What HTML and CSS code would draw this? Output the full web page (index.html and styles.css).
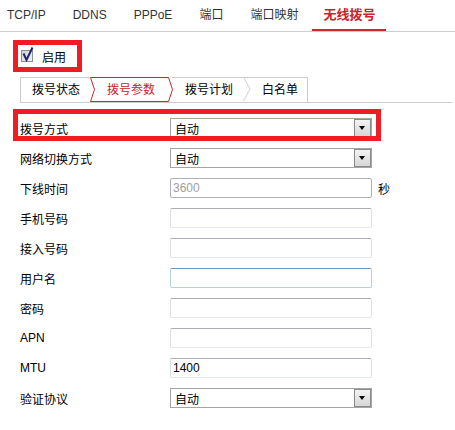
FILE: index.html
```html
<!DOCTYPE html>
<html lang="zh-CN">
<head>
<meta charset="utf-8">
<title>无线拨号</title>
<link rel="stylesheet" href="styles.css">
</head>
<body>
<nav class="topnav">
  <a class="topnav__tab">TCP/IP</a>
  <a class="topnav__tab">DDNS</a>
  <a class="topnav__tab">PPPoE</a>
  <a class="topnav__tab">端口</a>
  <a class="topnav__tab">端口映射</a>
  <a class="topnav__tab topnav__tab--active">无线拨号</a>
</nav>

<label class="enable">
  <svg class="enable__box" width="15" height="17" viewBox="0 0 15 17">
    <defs>
      <linearGradient id="cbg" x1="0" y1="0" x2="1" y2="1">
        <stop offset="0" stop-color="#cfcfcf"/>
        <stop offset="1" stop-color="#f4f4f4"/>
      </linearGradient>
    </defs>
    <rect x="0.5" y="4.5" width="11" height="11" fill="url(#cbg)" stroke="#8e8f8f"/>
    <path d="M2.5 7.5 L5.5 14 L11.5 1.5" fill="none" stroke="#1b2470" stroke-width="2" stroke-linejoin="miter"/>
  </svg>
  <span>启用</span>
</label>

<div class="subtabs">
  <a class="subtabs__tab subtabs__tab--first">拨号状态</a>
  <a class="subtabs__tab subtabs__tab--active">拨号参数
    <svg class="subtabs__outline" viewBox="0 0 83 26" preserveAspectRatio="none">
      <polygon points="0.5,0.5 78.5,0.5 82.5,12.5 78.5,24.5 0.5,24.5 4.5,12.5" fill="none" stroke="#d0252d" stroke-width="1"/>
    </svg>
  </a>
  <a class="subtabs__tab subtabs__tab--third">拨号计划</a>
  <a class="subtabs__tab subtabs__tab--last">白名单
    <svg class="subtabs__chev" viewBox="0 0 8 26" preserveAspectRatio="none">
      <polyline points="0.5,0 7,12.5 0.5,25" fill="none" stroke="#cfcfcf" stroke-width="1"/>
    </svg>
  </a>
</div>

<form class="form">
  <div class="row row--marked">
    <span class="row__label">拨号方式</span>
    <div class="select"><span class="select__text">自动</span><span class="select__btn"></span></div>
  </div>
  <div class="row">
    <span class="row__label">网络切换方式</span>
    <div class="select"><span class="select__text">自动</span><span class="select__btn"></span></div>
  </div>
  <div class="row">
    <span class="row__label">下线时间</span>
    <input class="input input--disabled" value="3600" disabled>
    <span class="row__unit">秒</span>
  </div>
  <div class="row">
    <span class="row__label">手机号码</span>
    <input class="input">
  </div>
  <div class="row">
    <span class="row__label">接入号码</span>
    <input class="input">
  </div>
  <div class="row">
    <span class="row__label">用户名</span>
    <input class="input input--focus">
  </div>
  <div class="row">
    <span class="row__label">密码</span>
    <input class="input" type="password">
  </div>
  <div class="row">
    <span class="row__label">APN</span>
    <input class="input">
  </div>
  <div class="row">
    <span class="row__label">MTU</span>
    <input class="input" value="1400">
  </div>
  <div class="row">
    <span class="row__label">验证协议</span>
    <div class="select"><span class="select__text">自动</span><span class="select__btn"></span></div>
  </div>
</form>
</body>
</html>
```

FILE: styles.css
```css
*, *::before, *::after { box-sizing: border-box; }

body {
  margin: 0;
  background: #fff;
  color: #000;
  font-family: "Liberation Sans", "Noto Sans CJK SC", sans-serif;
  font-size: 12px;
}

/* top navigation */
.topnav {
  display: flex;
  height: 32px;
  padding-left: 7px;
  border-bottom: 1px solid #cccccc;
}
.topnav__tab {
  height: 31px;
  line-height: 30px;
  padding: 0 13px;
  margin-right: 1px;
  color: #333;
  font-size: 12px;
  border-bottom: 2px solid transparent;
}
.topnav__tab:first-child { padding-left: 0; }
.topnav__tab--active {
  color: #c9232c;
  font-weight: bold;
  font-size: 13px;
  border-bottom-color: #d0252d;
  padding: 0 11px;
}

/* enable checkbox */
.enable {
  display: flex;
  align-items: center;
  width: 59px;
  height: 22px;
  margin: 13px 0 0 18px;
  padding-left: 3px;
  outline: 5px solid #ee1c24;
}
.enable__box { margin-top: -3px; }
.enable span { margin-left: 6px; }

/* sub tabs */
.subtabs {
  display: flex;
  height: 26px;
  margin: 10px 3px 0 20px;
  border-bottom: 1px solid #cccccc;
}
.subtabs__tab {
  position: relative;
  height: 25px;
  line-height: 24px;
  border-top: 1px solid #cccccc;
  color: #000;
}
.subtabs__tab--first {
  border-left: 1px solid #cccccc;
  padding: 0 10px 0 11px;
}
.subtabs__tab--active {
  width: 82px;
  color: #c9232c;
  padding-left: 17px;
  border-top-color: transparent;
}
.subtabs__tab--third {
  width: 74px;
  padding-left: 13px;
}
.subtabs__tab--last {
  width: 62px;
  padding-left: 16px;
  border-right: 1px solid #cccccc;
}
.subtabs__outline {
  position: absolute;
  left: 0;
  top: -1px;
  width: 83px;
  height: 26px;
}
.subtabs__chev {
  position: absolute;
  left: -3px;
  top: -1px;
  width: 8px;
  height: 25px;
}

/* form */
.form {
  margin-top: 10px;
  padding-left: 20px;
}
.row {
  position: relative;
  display: flex;
  align-items: center;
  height: 30px;
}
.row--marked::after {
  content: "";
  position: absolute;
  left: -7px;
  top: -4px;
  width: 368px;
  height: 32px;
  border: 5px solid #ee1c24;
}
.row__label {
  width: 150px;
  flex: none;
}
.row__unit { margin-left: 6px; }

.select {
  display: flex;
  align-items: center;
  width: 202px;
  height: 20px;
  border: 1px solid #a5a5a5;
  background: #fff;
}
.select__text {
  flex: 1;
  padding-left: 4px;
}
.select__btn {
  position: relative;
  width: 17px;
  height: 18px;
  border: 1px solid #8a8a8a;
  background: linear-gradient(#f3f3f3, #d6d6d6);
}
.select__btn::before {
  content: "";
  position: absolute;
  left: 4px;
  top: 6px;
  width: 0;
  height: 0;
  border-left: 3.5px solid transparent;
  border-right: 3.5px solid transparent;
  border-top: 4px solid #000;
}

.input {
  width: 202px;
  height: 20px;
  margin: 0;
  padding: 0 2px;
  border: 1px solid;
  border-color: #abadb3 #e2e3ea #e3e9ef #dbdfe6;
  border-radius: 2px;
  font: inherit;
  color: #000;
  background: #fff;
  outline: none;
}
.input--disabled {
  border-color: #adb2b5;
  color: #a0a0a0;
}
.input--focus {
  border-color: #5d9ad0 #b5cfe7 #b5cfe7 #b5cfe7;
}
```
